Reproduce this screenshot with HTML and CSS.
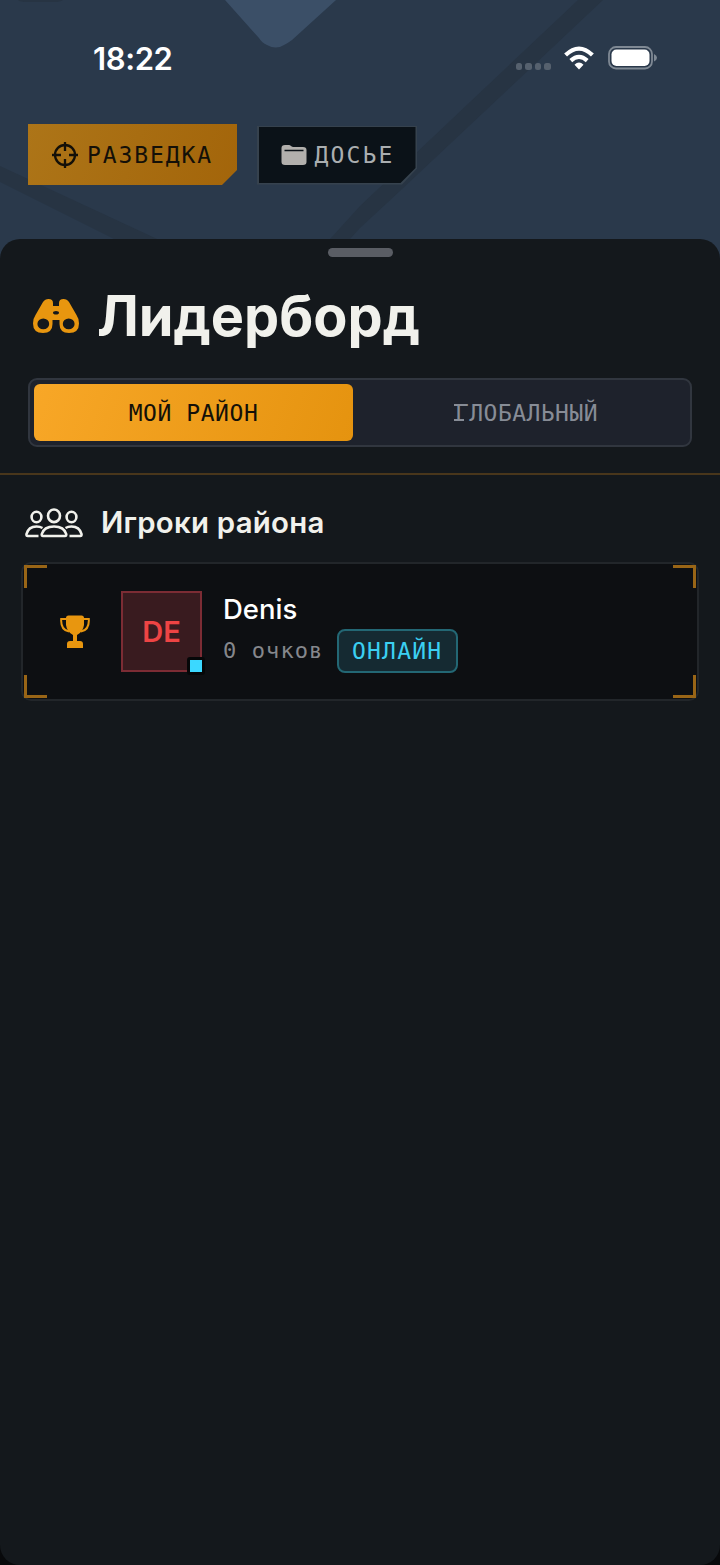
FILE: index.html
```
<!DOCTYPE html>
<html lang="ru">
<head>
<meta charset="utf-8">
<title>Лидерборд</title>
<link rel="stylesheet" href="styles.css">
</head>
<body>
<div class="screen">
  <svg class="map" viewBox="0 0 720 270" aria-hidden="true">
    <path fill="#273443" d="M578 0H603L500 97L400 191L360 228L340 250H320L331 238L360 206L470 102ZM0 166L155 238L180 250H136L112 238L0 182ZM18 0H63Q60 2 54 2H27Q20 2 18 0Z"/>
    <path fill="#3b4f67" d="M225 0H336L292 40Q288 43 284 45Q276 50 267 45Q262 43 259 38Z"/>
  </svg>
  <header class="status">
    <span class="clock">18:22</span>
    <div class="indicators">
      <div class="dots"><i></i><i></i><i></i><i></i></div>
      <svg class="wifi" width="30" height="24" viewBox="0 0 30 24">
        <g fill="none" stroke="#fff" stroke-width="4.200"><path d="M1.600 9Q15-3.800 28.400 9"/><path d="M6.800 14.600Q15 7.200 23.200 14.600"/></g>
        <path fill="#fff" d="M10.500 18.700Q15 14.500 19.500 18.700L15 23.500Z"/>
      </svg>
      <svg class="battery" width="50" height="24" viewBox="0 0 50 24">
        <rect x="1" y="1" width="43" height="21.500" rx="7" fill="none" stroke="#7f8994" stroke-width="1.800"/>
        <rect x="3.500" y="3.500" width="38" height="16.500" rx="5" fill="#fff"/>
        <path d="M46 8Q49 9.500 49 11.700T46 15.500Z" fill="#7f8994"/>
      </svg>
    </div>
  </header>
  <nav class="nav">
    <button class="tab tab-scout">
      <svg width="26" height="26" viewBox="0 0 26 26" fill="none" stroke="#141008" stroke-width="2.300"><circle cx="13" cy="13" r="10"/><path d="M13 0V9M13 17V26M0 13H9M17 13H26"/></svg>
      <span>РАЗВЕДКА</span>
    </button>
    <button class="tab-frame"><span class="tab tab-dossier">
      <svg width="26" height="22" viewBox="0 0 26 22"><path fill="#b2b0ad" d="M.5 6V4Q.5 1 4 1H8Q9 1 10 2Q11 3 12.500 3H22Q25.500 3 25.500 6V18Q25.500 21 22 21H4Q.5 21 .5 18V6Z"/><path d="M3.500 6.500H22.500" stroke="#0b1218" stroke-width="1.700"/></svg>
      <span>ДОСЬЕ</span>
    </span></button>
  </nav>
  <main class="sheet">
    <div class="grabber"></div>
    <section class="head">
      <h1 class="title">
        <svg width="46" height="36" viewBox="0 0 46 36"><path fill="#e8960f" fill-rule="evenodd" d="M2.500 17L10 4Q12 1 15.500 1Q20 1 20 5V8H26V5Q26 1 30.500 1Q34 1 36 4L43.500 17Q46 20.500 46 25.500Q46 35 36 35Q26.500 35 26.500 26V22H19.500V26Q19.500 35 10 35Q0 35 0 25.500Q0 20.500 2.500 17ZM10.300 20.500A5.900 5.400 0 1 0 10.300 31.300A5.900 5.400 0 1 0 10.300 20.500ZM35.700 20.500A5.900 5.400 0 1 0 35.700 31.300A5.900 5.400 0 1 0 35.700 20.500ZM23 13Q20 13 20 14.800T23 16.600T26 14.800T23 13Z"/></svg>
        <span>Лидерборд</span>
      </h1>
      <div class="segments">
        <button class="segment active">МОЙ РАЙОН</button>
        <button class="segment other"><span class="slab">Г</span>ЛОБАЛЬНЫЙ</button>
      </div>
    </section>
    <section class="players">
      <h2 class="subtitle">
        <svg width="58" height="30" viewBox="0 0 58 30" fill="none" stroke="#f1f1ec" stroke-width="2.600" stroke-linejoin="round"><ellipse cx="29" cy="7.800" rx="6" ry="6.300"/><ellipse cx="11.500" cy="9" rx="4.900" ry="5.200"/><ellipse cx="46.500" cy="9" rx="4.900" ry="5.200"/><path d="M18 28Q16.500 28 16.800 26Q19 18.500 29 18.500T41.200 26Q41.500 28 40 28ZM13.500 28H2.700Q1.200 28 1.500 26Q3.500 18.500 11.500 18.500Q15 18.500 17.500 20M44.500 28H55.300Q56.800 28 56.500 26Q54.500 18.500 46.500 18.500Q43 18.500 40.500 20"/></svg>
        <span>Игроки района</span>
      </h2>
      <article class="card">
        <i class="corner tl"></i><i class="corner tr"></i><i class="corner bl"></i><i class="corner br"></i>
        <svg class="trophy" width="30" height="34" viewBox="0 0 30 34"><path fill="#e8960f" d="M6 3Q6 .5 8.500.5H21.500Q24 .5 24 3V10Q23 17 17 20V26H20Q23 26 23 29V33H7V29Q7 26 10 26H13V20Q7 17 6 10Z"/><path fill="none" stroke="#e8960f" stroke-width="2" d="M6 4H1.200Q.5 15 9 16.500M24 4H28.800Q29.500 15 21 16.500"/></svg>
        <div class="avatar">DE<i class="presence"></i></div>
        <div class="info">
          <div class="name">Denis</div>
          <div class="meta"><span class="score">0 очков</span><span class="badge">ОНЛАЙН</span></div>
        </div>
      </article>
    </section>
  </main>
</div>
</body>
</html>
```
FILE: styles.css
```
* { box-sizing: border-box; }
body { margin: 0; background: #08090b; }
button { border: 0; margin: 0; padding: 0; background: none; }
svg { display: block; flex: none; }
.screen {
  position: relative;
  width: 720px;
  height: 1565px;
  overflow: hidden;
  display: flex;
  flex-direction: column;
  background: linear-gradient(#2a394b 300px, #08090b 300px);
  font-family: Inter, "Liberation Sans", sans-serif;
}
.map { position: absolute; left: 0; top: 0; width: 720px; height: 270px; }
.status, .nav, .sheet { position: relative; }
.status {
  height: 124px;
  padding: 39px 62px 0 93px;
  display: flex;
  justify-content: space-between;
  align-items: flex-start;
}
.clock { font-size: 31px; line-height: 40px; font-weight: 600; color: #fff; letter-spacing: -0.4px; }
.indicators { display: flex; align-items: flex-start; padding-top: 7px; }
.dots { display: flex; gap: 3px; margin: 17px 13px 0 0; }
.dots i { width: 6.6px; height: 6.6px; border-radius: 2.5px; background: #56616e; }
.wifi { margin-right: 14px; }
.nav { height: 115px; display: flex; align-items: flex-start; gap: 20px; padding: 0 28px; }
.tab, .segment, .score, .badge { font-family: "DejaVu Sans Mono", monospace; white-space: pre; }
.tab { display: flex; align-items: center; font-size: 23px; line-height: 30px; }
.tab-scout {
  width: 209px;
  height: 61px;
  padding-left: 24px;
  gap: 9px;
  letter-spacing: 1.9px;
  color: #141008;
  background: linear-gradient(110deg, #ad7518, #a3650a);
  clip-path: polygon(0 0, 100% 0, 100% 46px, calc(100% - 15px) 100%, 0 100%);
}
.tab-frame {
  width: 160px;
  height: 59px;
  margin-top: 1.5px;
  padding: 1.5px;
  background: #36424e;
  clip-path: polygon(0 0, 100% 0, 100% 43px, calc(100% - 15px) 100%, 0 100%);
}
.tab-dossier {
  height: 56px;
  padding-left: 22px;
  gap: 8px;
  letter-spacing: 2.15px;
  color: #aaaeb0;
  background: #0b1218;
  clip-path: polygon(0 0, 100% 0, 100% 41px, calc(100% - 15px) 100%, 0 100%);
}
.sheet { flex: 1; border-radius: 20px; background: #14181c; }
.grabber { width: 65px; height: 9px; margin: 9px auto 0; border-radius: 5px; background: #5a5d64; }
.head { height: 218px; padding: 25px 28px 0; border-bottom: 2px solid #49361b; }
.title {
  display: flex;
  align-items: center;
  gap: 18px;
  height: 68px;
  margin: 0 0 28px;
  padding-left: 5px;
  font-size: 55.8px;
  line-height: 68px;
  font-weight: 700;
  letter-spacing: 0;
  color: #f1f1ec;
}
.segments {
  display: flex;
  height: 69px;
  padding: 4px;
  border: 2px solid #31363f;
  border-radius: 9px;
  background: #1e222c;
}
.segment {
  flex: 1;
  height: 57px;
  border-radius: 6px;
  font-size: 23px;
  line-height: 59px;
  letter-spacing: 0.55px;
  color: #878c96;
}
.segment.active { flex: none; width: 319px; color: #141008; background: linear-gradient(110deg, #f8a727, #e5930f); }
.segment.other { padding-left: 14px; letter-spacing: 0.45px; }
.slab { position: relative; }
.slab::before, .slab::after {
  content: "";
  position: absolute;
  left: -1px;
  bottom: 5px;
  width: 10px;
  height: 2px;
  background: #878c96;
}
.slab::before { width: 5px; bottom: 20px; }
.players { padding: 28px 21px 0; }
.subtitle {
  display: flex;
  align-items: center;
  gap: 18px;
  height: 40px;
  margin: 0 0 19px;
  padding-left: 4px;
  font-size: 29.4px;
  line-height: 40px;
  font-weight: 600;
  letter-spacing: 0.25px;
  color: #f1f1ec;
}
.card {
  position: relative;
  display: flex;
  align-items: center;
  height: 139px;
  padding-left: 37px;
  border: 2px solid #22262a;
  border-radius: 10px;
  background: #0d0f12;
}
.trophy { margin-right: 31px; }
.corner { position: absolute; width: 23px; height: 23px; border: 0 solid #996516; }
.tl { left: 1px; top: 1px; border-width: 3px 0 0 3px; }
.tr { right: 1px; top: 1px; border-width: 3px 3px 0 0; }
.bl { left: 1px; bottom: 1px; border-width: 0 0 3px 3px; }
.br { right: 1px; bottom: 1px; border-width: 0 3px 3px 0; }
.avatar {
  position: relative;
  width: 81px;
  height: 81px;
  margin-right: 21px;
  border: 2px solid #7c2c34;
  background: #391b1f;
  color: #ee4444;
  font-size: 29px;
  line-height: 78px;
  font-weight: 600;
  text-align: center;
}
.presence {
  position: absolute;
  right: -5px;
  bottom: -5px;
  width: 18px;
  height: 18px;
  border: 3px solid #050708;
  border-radius: 3px;
  background: #3bd8ff;
}
.info { padding-top: 1px; }
.name { height: 37px; font-size: 27.5px; line-height: 34px; font-weight: 500; color: #fff; }
.meta { display: flex; align-items: center; }
.score { width: 114px; font-size: 22px; letter-spacing: 1.1px; color: #85878c; }
.badge {
  width: 121px;
  height: 44px;
  padding-left: 13px;
  border: 2px solid #236774;
  border-radius: 8px;
  background: #152a32;
  font-size: 23px;
  line-height: 40px;
  letter-spacing: 1.2px;
  color: #3bd0f2;
}
```
